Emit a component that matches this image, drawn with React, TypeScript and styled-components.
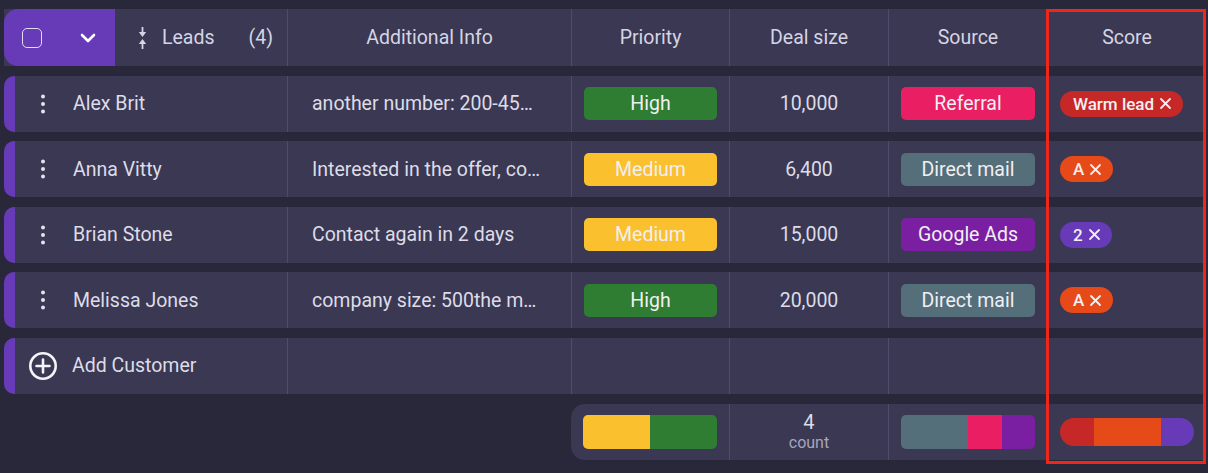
import React from 'react';
import styled, { createGlobalStyle } from 'styled-components';

const GlobalStyle = createGlobalStyle`
  html, body {
    margin: 0;
    padding: 0;
    background: #29273a;
  }
  body {
    font-family: Roboto, 'Noto Sans', sans-serif;
  }
`;

const PURPLE = '#673ab7';
const CELL = '#3a3852';
const LINE = '#4e4c68';
const COLS = '283px 284px 158px 159px 159px 159px';

const Board = styled.div`
  position: relative;
  width: 1208px;
  height: 473px;
  box-sizing: border-box;
  padding: 9px 2px 0 4px;
  display: flex;
  flex-direction: column;
  gap: 9.6px;
  background: #29273a;
  overflow: hidden;
`;

const Row = styled.div<{ $h?: number }>`
  display: grid;
  grid-template-columns: ${COLS};
  height: ${(p) => p.$h ?? 56}px;
`;

const Cell = styled.div<{ $left?: boolean }>`
  display: flex;
  align-items: center;
  justify-content: ${(p) => (p.$left ? 'flex-start' : 'center')};
  box-sizing: border-box;
  min-width: 0;
  padding: ${(p) => (p.$left ? '0 24px' : '0 12px')};
  background: ${CELL};
  border-left: 1px solid ${LINE};
  color: #dddce8;
  font-size: 19.5px;
  white-space: nowrap;
`;

const HeadCell = styled(Cell)`
  color: #d5d4e4;
`;

const Spacer = styled.div``;

/* header: lead column */
const LeadHead = styled.div`
  display: flex;
  background: ${CELL};
`;

const SelectBlock = styled.div`
  width: 111px;
  display: flex;
  align-items: center;
  padding-left: 18px;
  box-sizing: border-box;
  gap: 38px;
  background: ${PURPLE};
  border-radius: 14px 0 0 14px;
`;

const CheckBox = styled.span`
  width: 20px;
  height: 20px;
  box-sizing: border-box;
  border: 1.6px solid #e2dbf2;
  border-radius: 5px;
`;

const LeadsTitle = styled.div`
  flex: 1;
  display: flex;
  align-items: center;
  padding: 0 14px 0 23px;
  color: #d5d4e4;
  font-size: 19.5px;
  span:last-child {
    margin-left: auto;
  }
`;

/* body rows */
const NameCell = styled.div`
  display: flex;
  align-items: center;
  background: ${CELL};
  border-left: 11px solid ${PURPLE};
  border-radius: 10px 0 0 10px;
  padding-left: 24px;
  gap: 26px;
  color: #dddce8;
  font-size: 19.5px;
`;

const AddCell = styled(NameCell)`
  padding-left: 13px;
  gap: 14px;
`;

const Pill = styled.div<{ $bg: string }>`
  width: 100%;
  height: 33px;
  border-radius: 5px;
  background: ${(p) => p.$bg};
  display: flex;
  align-items: center;
  justify-content: center;
  color: #f1eff4;
  font-size: 19.5px;
`;

const ScoreCell = styled(Cell)`
  justify-content: flex-start;
  padding: 0 12px;
`;

const Chip = styled.span<{ $bg: string }>`
  display: inline-flex;
  align-items: center;
  gap: 5px;
  height: 26px;
  padding: 0 11px 0 13px;
  border-radius: 13px;
  background: ${(p) => p.$bg};
  color: #f4eff2;
  font-size: 17px;
  font-weight: 500;
`;

/* footer */
const FootFirst = styled(Cell)`
  border-left: none;
  border-radius: 14px 0 0 14px;
`;

const StackBar = styled.div<{ $pill?: boolean }>`
  width: 100%;
  height: ${(p) => (p.$pill ? 28 : 34)}px;
  display: flex;
  overflow: hidden;
  border-radius: ${(p) => (p.$pill ? '14px' : '5px')};
`;

const Segment = styled.div<{ $bg: string; $grow: number }>`
  flex: ${(p) => p.$grow};
  background: ${(p) => p.$bg};
`;

const Count = styled.div`
  display: flex;
  flex-direction: column;
  align-items: center;
  line-height: 1;
  color: #dddce8;
  font-size: 20px;
  small {
    margin-top: 3px;
    font-size: 16px;
    color: #a7a6bb;
  }
`;

const Highlight = styled.div`
  position: absolute;
  left: 1046px;
  top: 9px;
  width: 160px;
  height: 455px;
  box-sizing: border-box;
  border: 3px solid #f0261a;
  pointer-events: none;
`;

const Chevron = () => (
  <svg width="16" height="10" viewBox="0 0 16 10" fill="none">
    <path d="M2 2l6 6 6-6" stroke="#fff" strokeWidth="2.6" strokeLinecap="round" strokeLinejoin="round" />
  </svg>
);

const SortIcon = () => (
  <svg width="9" height="22" viewBox="0 0 9 22" fill="#d5d4e4">
    <rect x="3.6" y="0" width="1.8" height="5.5" />
    <path d="M0.8 5h7.4L4.5 10z" />
    <path d="M0.8 17h7.4L4.5 12z" />
    <rect x="3.6" y="16.5" width="1.8" height="5.5" />
  </svg>
);

const Kebab = () => (
  <svg width="8" height="22" viewBox="0 0 8 22" fill="#e4e3ee">
    <circle cx="4" cy="3.5" r="2" />
    <circle cx="4" cy="11" r="2" />
    <circle cx="4" cy="18.5" r="2" />
  </svg>
);

const CirclePlus = () => (
  <svg width="30" height="30" viewBox="0 0 30 30" fill="none" stroke="#f4f3f8" strokeWidth="2.6" strokeLinecap="round">
    <circle cx="15" cy="15" r="12.7" />
    <path d="M15 8.5v13M8.5 15h13" />
  </svg>
);

const Cross = () => (
  <svg width="13" height="13" viewBox="0 0 13 13" fill="none" stroke="#f4eff2" strokeWidth="1.8" strokeLinecap="round">
    <path d="M2 2l9 9M11 2l-9 9" />
  </svg>
);

const PRIORITY: Record<string, string> = { High: '#2e7d32', Medium: '#fbc02d' };
const SOURCE: Record<string, string> = {
  Referral: '#e91e63',
  'Direct mail': '#546e7a',
  'Google Ads': '#7b1fa2',
};

const leads = [
  { name: 'Alex Brit', info: 'another number: 200-45…', priority: 'High', deal: '10,000', source: 'Referral', score: 'Warm lead', scoreColor: '#c62828' },
  { name: 'Anna Vitty', info: 'Interested in the offer, co…', priority: 'Medium', deal: '6,400', source: 'Direct mail', score: 'A', scoreColor: '#e64a19' },
  { name: 'Brian Stone', info: 'Contact again in 2 days', priority: 'Medium', deal: '15,000', source: 'Google Ads', score: '2', scoreColor: '#673ab7' },
  { name: 'Melissa Jones', info: 'company size: 500the m…', priority: 'High', deal: '20,000', source: 'Direct mail', score: 'A', scoreColor: '#e64a19' },
];

const App: React.FC = () => {
  return (
    <>
      <GlobalStyle />
      <Board>
        <Row $h={57}>
          <LeadHead>
            <SelectBlock>
              <CheckBox />
              <Chevron />
            </SelectBlock>
            <LeadsTitle>
              <SortIcon />
              <span style={{ marginLeft: 15 }}>Leads</span>
              <span>(4)</span>
            </LeadsTitle>
          </LeadHead>
          <HeadCell>Additional Info</HeadCell>
          <HeadCell>Priority</HeadCell>
          <HeadCell>Deal size</HeadCell>
          <HeadCell>Source</HeadCell>
          <HeadCell>Score</HeadCell>
        </Row>

        {leads.map((l) => (
          <Row key={l.name}>
            <NameCell>
              <Kebab />
              {l.name}
            </NameCell>
            <Cell $left>{l.info}</Cell>
            <Cell>
              <Pill $bg={PRIORITY[l.priority]}>{l.priority}</Pill>
            </Cell>
            <Cell>{l.deal}</Cell>
            <Cell>
              <Pill $bg={SOURCE[l.source]}>{l.source}</Pill>
            </Cell>
            <ScoreCell>
              <Chip $bg={l.scoreColor}>
                {l.score}
                <Cross />
              </Chip>
            </ScoreCell>
          </Row>
        ))}

        <Row>
          <AddCell>
            <CirclePlus />
            Add Customer
          </AddCell>
          <Cell />
          <Cell />
          <Cell />
          <Cell />
          <Cell />
        </Row>

        <Row>
          <Spacer />
          <Spacer />
          <FootFirst>
            <StackBar>
              <Segment $bg="#fbc02d" $grow={1} />
              <Segment $bg="#2e7d32" $grow={1} />
            </StackBar>
          </FootFirst>
          <Cell>
            <Count>
              4<small>count</small>
            </Count>
          </Cell>
          <Cell>
            <StackBar>
              <Segment $bg="#546e7a" $grow={2} />
              <Segment $bg="#e91e63" $grow={1} />
              <Segment $bg="#7b1fa2" $grow={1} />
            </StackBar>
          </Cell>
          <Cell>
            <StackBar $pill>
              <Segment $bg="#c62828" $grow={1} />
              <Segment $bg="#e64a19" $grow={2} />
              <Segment $bg="#673ab7" $grow={1} />
            </StackBar>
          </Cell>
        </Row>

        <Highlight />
      </Board>
    </>
  );
};

export default App;
